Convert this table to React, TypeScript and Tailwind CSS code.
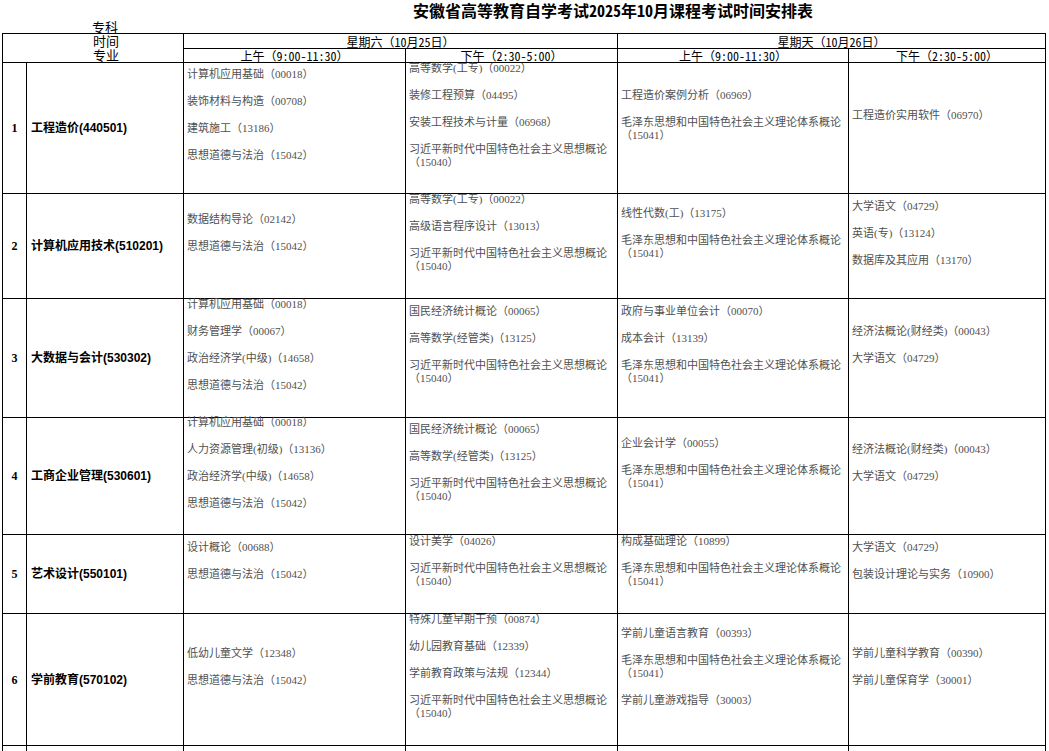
import React from "react";

type Row = {
  no: string;
  major: string;
  h: string;
  cells: string[][];
};

const XI = "习近平新时代中国特色社会主义思想概论|（15040）";
const MAO = "毛泽东思想和中国特色社会主义理论体系概论|（15041）";

const rows: Row[] = [
  {
    no: "1",
    major: "工程造价(440501)",
    h: "h-[131px]",
    cells: [
      ["计算机应用基础（00018）", "装饰材料与构造（00708）", "建筑施工（13186）", "思想道德与法治（15042）"],
      ["高等数学(工专)（00022）", "装修工程预算（04495）", "安装工程技术与计量（06968）", XI],
      ["工程造价案例分析（06969）", MAO],
      ["工程造价实用软件（06970）"],
    ],
  },
  {
    no: "2",
    major: "计算机应用技术(510201)",
    h: "h-[105px]",
    cells: [
      ["数据结构导论（02142）", "思想道德与法治（15042）"],
      ["高等数学(工专)（00022）", "高级语言程序设计（13013）", XI],
      ["线性代数(工)（13175）", MAO],
      ["大学语文（04729）", "英语(专)（13124）", "数据库及其应用（13170）"],
    ],
  },
  {
    no: "3",
    major: "大数据与会计(530302)",
    h: "h-[119px]",
    cells: [
      ["计算机应用基础（00018）", "财务管理学（00067）", "政治经济学(中级)（14658）", "思想道德与法治（15042）"],
      ["国民经济统计概论（00065）", "高等数学(经管类)（13125）", XI],
      ["政府与事业单位会计（00070）", "成本会计（13139）", MAO],
      ["经济法概论(财经类)（00043）", "大学语文（04729）"],
    ],
  },
  {
    no: "4",
    major: "工商企业管理(530601)",
    h: "h-[117px]",
    cells: [
      ["计算机应用基础（00018）", "人力资源管理(初级)（13136）", "政治经济学(中级)（14658）", "思想道德与法治（15042）"],
      ["国民经济统计概论（00065）", "高等数学(经管类)（13125）", XI],
      ["企业会计学（00055）", MAO],
      ["经济法概论(财经类)（00043）", "大学语文（04729）"],
    ],
  },
  {
    no: "5",
    major: "艺术设计(550101)",
    h: "h-[79px]",
    cells: [
      ["设计概论（00688）", "思想道德与法治（15042）"],
      ["设计美学（04026）", XI],
      ["构成基础理论（10899）", MAO],
      ["大学语文（04729）", "包装设计理论与实务（10900）"],
    ],
  },
  {
    no: "6",
    major: "学前教育(570102)",
    h: "h-[132px]",
    cells: [
      ["低幼儿童文学（12348）", "思想道德与法治（15042）"],
      ["特殊儿童早期干预（00874）", "幼儿园教育基础（12339）", "学前教育政策与法规（12344）", XI],
      ["学前儿童语言教育（00393）", MAO, "学前儿童游戏指导（30003）"],
      ["学前儿童科学教育（00390）", "学前儿童保育学（30001）"],
    ],
  },
];

function CourseCell({ items }: { items: string[] }) {
  return (
    <td className="border border-black p-0 align-middle">
      <div className="flex flex-col justify-center pl-[3px] pb-[22px] -translate-y-[2px] gap-[14px] text-[11px] leading-[13px] text-[#505050] font-[family-name:Liberation_Serif,Noto_Sans_CJK_SC,serif]">
        {items.map((it, i) => (
          <div key={i} className="flex flex-col">
            {it.split("|").map((ln, j) => (
              <span key={j} className="whitespace-nowrap">
                {ln}
              </span>
            ))}
          </div>
        ))}
      </div>
    </td>
  );
}

export default function App() {
  const hdr =
    "border border-black p-0 text-center align-bottom text-[12px] leading-[13px] text-black font-[family-name:Noto_Sans_Mono_CJK_SC,Noto_Sans_CJK_SC,sans-serif]";
  return (
    <div className="w-[1049px] h-[751px] overflow-hidden bg-white font-[family-name:Noto_Sans_CJK_SC,sans-serif]">
      <div className="h-[33px] flex flex-col">
        <div className="h-[21px] pl-[413px] text-[16px] leading-[21px] font-bold text-black whitespace-nowrap font-[family-name:Noto_Sans_Mono_CJK_SC,Noto_Sans_CJK_SC,sans-serif]">
          安徽省高等教育自学考试2025年10月课程考试时间安排表
        </div>
        <div className="h-[12px] pl-[92px] text-[13px] leading-[12px] text-black">专科</div>
      </div>
      <table className="ml-[2px] w-[1043px] table-fixed border-collapse">
        <colgroup>
          <col className="w-[24px]" />
          <col className="w-[157px]" />
          <col className="w-[222px]" />
          <col className="w-[212px]" />
          <col className="w-[231px]" />
          <col className="w-[197px]" />
        </colgroup>
        <tbody>
          <tr className="h-[14px]">
            <td colSpan={2} rowSpan={2} className="border border-black p-0 align-bottom">
              <div className="flex flex-col pl-[90px] text-[13px] leading-[14px] text-black">
                <span>时间</span>
                <span>专业</span>
              </div>
            </td>
            <td colSpan={2} className={hdr}>
              星期六（10月25日）
            </td>
            <td colSpan={2} className={hdr}>
              星期天（10月26日）
            </td>
          </tr>
          <tr className="h-[14px]">
            <td className={hdr}>上午（9:00-11:30）</td>
            <td className={hdr}>下午（2:30-5:00）</td>
            <td className={hdr}>上午（9:00-11:30）</td>
            <td className={hdr}>下午（2:30-5:00）</td>
          </tr>
          {rows.map((r) => (
            <tr key={r.no} className={r.h}>
              <td className="border border-black p-0 text-center align-middle text-[12px] font-bold text-black font-[family-name:Liberation_Serif,serif]">
                {r.no}
              </td>
              <td className="border border-black p-0 pl-[4px] align-middle text-[12px] font-bold text-black whitespace-nowrap font-[family-name:Liberation_Sans,Noto_Sans_CJK_SC,sans-serif]">
                {r.major}
              </td>
              {r.cells.map((c, i) => (
                <CourseCell key={i} items={c} />
              ))}
            </tr>
          ))}
          <tr className="h-[30px]">
            <td className="border border-black p-0" />
            <td className="border border-black p-0" />
            <td className="border border-black p-0" />
            <td className="border border-black p-0" />
            <td className="border border-black p-0" />
            <td className="border border-black p-0" />
          </tr>
        </tbody>
      </table>
    </div>
  );
}
